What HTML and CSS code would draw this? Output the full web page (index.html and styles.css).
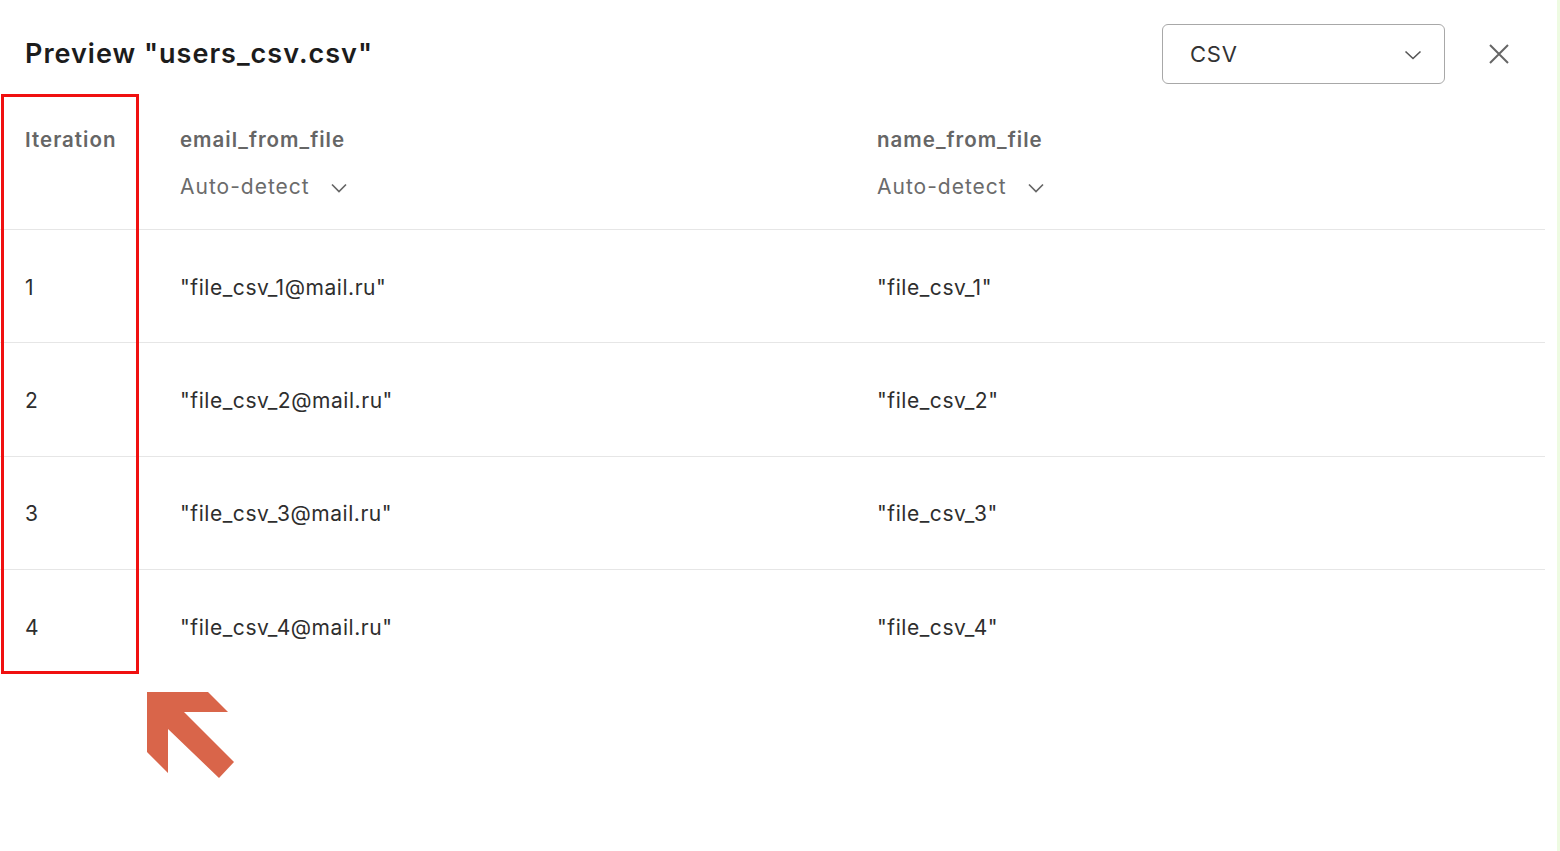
FILE: index.html
```html
<!DOCTYPE html>
<html lang="en">
<head>
<meta charset="utf-8">
<title>Preview</title>
<link rel="stylesheet" href="styles.css">
</head>
<body>
<div class="page">
  <div class="topbar">
    <h1 class="title">Preview "users_csv.csv"</h1>
    <div class="actions">
      <div class="select">
        <span>CSV</span>
        <svg class="chev" width="18" height="10" viewBox="0 0 18 10"><path d="M1.5 1.5 L9 8.5 L16.5 1.5" fill="none" stroke="#555" stroke-width="1.6"/></svg>
      </div>
      <svg class="close" width="20" height="20" viewBox="0 0 20 20"><path d="M1 1 L19 19 M19 1 L1 19" stroke="#666" stroke-width="2" fill="none"/></svg>
    </div>
  </div>
  <div class="table">
    <div class="row head">
      <div class="cell c1"><div class="hname">Iteration</div></div>
      <div class="cell c2"><div class="hname">email_from_file</div><div class="detect">Auto-detect <svg width="16" height="10" viewBox="0 0 16 10"><path d="M1 1.5 L8 8.5 L15 1.5" fill="none" stroke="#666" stroke-width="1.7"/></svg></div></div>
      <div class="cell c3"><div class="hname">name_from_file</div><div class="detect">Auto-detect <svg width="16" height="10" viewBox="0 0 16 10"><path d="M1 1.5 L8 8.5 L15 1.5" fill="none" stroke="#666" stroke-width="1.7"/></svg></div></div>
    </div>
    <div class="row data">
      <div class="cell c1">1</div><div class="cell c2">"file_csv_1@mail.ru"</div><div class="cell c3">"file_csv_1"</div>
    </div>
    <div class="row data">
      <div class="cell c1">2</div><div class="cell c2">"file_csv_2@mail.ru"</div><div class="cell c3">"file_csv_2"</div>
    </div>
    <div class="row data">
      <div class="cell c1">3</div><div class="cell c2">"file_csv_3@mail.ru"</div><div class="cell c3">"file_csv_3"</div>
    </div>
    <div class="row data last">
      <div class="cell c1">4</div><div class="cell c2">"file_csv_4@mail.ru"</div><div class="cell c3">"file_csv_4"</div>
    </div>
  </div>
  <div class="highlight"></div>
  <svg class="arrow" width="90" height="90" viewBox="0 0 90 90"><polygon points="0,0 61,0 81,20 37,20 87,70 72,86 21,37 21,81 0,60" fill="#d9654a"/></svg>
</div>
</body>
</html>
```
FILE: styles.css
```css
* { box-sizing: border-box; }
html, body { margin: 0; padding: 0; background: #fff; }
body { font-family: Inter, "Noto Sans", sans-serif; color: #333; }
.page {
  position: relative;
  width: 1560px;
  height: 851px;
  border-right: 3px solid #eefbe2;
  overflow: hidden;
}
.topbar {
  height: 94px;
  display: flex;
  align-items: flex-start;
  justify-content: space-between;
  padding: 24px 48px 0 25px;
}
.title {
  margin: 14px 0 0 0;
  font-size: 27px;
  line-height: 32px;
  font-weight: 600;
  letter-spacing: 1px;
  color: #1c1c1c;
}
.actions { display: flex; align-items: center; gap: 44px; }
.select {
  width: 283px;
  height: 60px;
  border: 1.5px solid #a8a8a8;
  border-radius: 6px;
  display: flex;
  align-items: center;
  justify-content: space-between;
  padding: 0 22px 0 27px;
  font-size: 22px;
  letter-spacing: 0.8px;
  color: #333;
}
.select .chev { margin-top: 2px; }
.close { display: block; }
.table { width: 1545px; }
.row { display: flex; }
.cell { padding-left: 25px; }
.c1 { width: 180px; padding-left: 25px; }
.c2 { width: 697px; padding-left: 0; }
.c3 { flex: 1; padding-left: 0; }
.head {
  height: 136px;
  padding-top: 34px;
  border-bottom: 1px solid #e6e6e6;
}
.hname {
  font-size: 20.5px;
  line-height: 24px;
  font-weight: 600;
  letter-spacing: 1px;
  color: #666;
}
.detect {
  margin-top: 21px;
  font-size: 21px;
  line-height: 28px;
  letter-spacing: 1px;
  color: #6b6b6b;
  display: flex;
  align-items: center;
  gap: 21px;
}
.detect svg { margin-top: 1px; }
.data {
  height: 113.4px;
  align-items: center;
  font-size: 21px;
  letter-spacing: 0.55px;
  color: #2e2e2e;
  border-bottom: 1px solid #e6e6e6;
}
.data .cell { padding-top: 2px; }
.data.last { border-bottom: none; }
.highlight {
  position: absolute;
  left: 1px;
  top: 94px;
  width: 138px;
  height: 580px;
  border: 3px solid #f01010;
}
.arrow { position: absolute; left: 147px; top: 692px; }
```
